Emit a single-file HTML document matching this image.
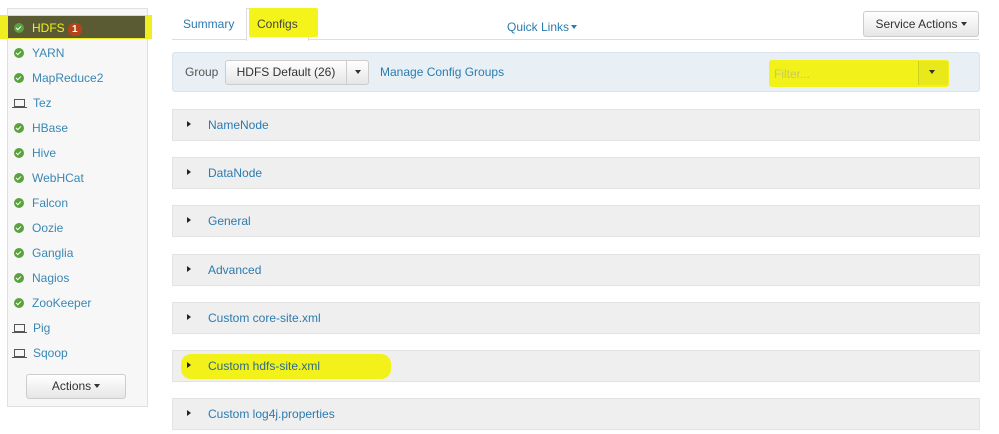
<!DOCTYPE html><html><head><style>
body{margin:0;width:999px;height:434px;background:#fff;font-family:"Liberation Sans",sans-serif;font-size:12px;position:relative;overflow:hidden}
.a{position:absolute}
.lk{color:#2a7bb0}
.side{left:7px;top:8px;width:139px;height:397px;background:#f7f7f7;border:1px solid #e0e0e0}
.it{left:14px;height:25px;line-height:25px;color:#3a87b5;font-size:12px}
.ck{display:inline-block;width:10px;height:10px;border-radius:50%;background:#5aa23c;margin-right:8px;vertical-align:-1px;position:relative}
.ck:after{content:"";position:absolute;left:3px;top:2px;width:2px;height:4px;border:solid #fff;border-width:0 1.5px 1.5px 0;transform:rotate(45deg)}
.lp{display:inline-block;width:9px;height:6px;border:1px solid #555;margin-right:8px;position:relative;vertical-align:0}
.lp:after{content:"";position:absolute;left:-3px;top:7px;width:15px;height:1px;background:#555}
.btn{background:linear-gradient(#fff,#e6e6e6);border:1px solid #ccc;border-radius:3px;color:#333;text-align:center}
.sec{left:172px;width:806px;height:30px;background:#efefef;border:1px solid #e3e3e3;line-height:30px}
.sec .t{position:absolute;left:14px;top:11px;width:0;height:0;border-left:4px solid #222;border-top:3.5px solid transparent;border-bottom:3.5px solid transparent}
.sec span{position:absolute;left:35px;color:#2a7bb0}
.car{display:inline-block;border-top:4px solid #333;border-left:3.5px solid transparent;border-right:3.5px solid transparent;vertical-align:2px;margin-left:3px}
</style></head><body>
<div class="a side"></div>
<div class="a" style="left:0;top:15px;width:152px;height:24px;background:#eeee22"></div>
<div class="a" style="left:8px;top:16px;width:137px;height:22px;background:#5b5b33"></div>
<div class="a it" style="top:16px;color:#f0f020"><span class="ck"></span>HDFS <span style="display:inline-block;background:#b5431a;color:#fff;border-radius:6px;font-size:10px;font-weight:bold;padding:0 4px;line-height:13px">1</span></div>
<div class="a it" style="top:41px"><span class="ck"></span>YARN</div>
<div class="a it" style="top:66px"><span class="ck"></span>MapReduce2</div>
<div class="a it" style="top:91px"><span class="lp"></span>Tez</div>
<div class="a it" style="top:116px"><span class="ck"></span>HBase</div>
<div class="a it" style="top:141px"><span class="ck"></span>Hive</div>
<div class="a it" style="top:166px"><span class="ck"></span>WebHCat</div>
<div class="a it" style="top:191px"><span class="ck"></span>Falcon</div>
<div class="a it" style="top:216px"><span class="ck"></span>Oozie</div>
<div class="a it" style="top:241px"><span class="ck"></span>Ganglia</div>
<div class="a it" style="top:266px"><span class="ck"></span>Nagios</div>
<div class="a it" style="top:291px"><span class="ck"></span>ZooKeeper</div>
<div class="a it" style="top:316px"><span class="lp"></span>Pig</div>
<div class="a it" style="top:341px"><span class="lp"></span>Sqoop</div>
<div class="a btn" style="left:26px;top:374px;width:98px;height:23px;line-height:23px">Actions<span class="car"></span></div>

<div class="a" style="left:172px;top:39px;width:807px;height:1px;background:#ddd"></div>
<div class="a lk" style="left:183px;top:17px">Summary</div>
<div class="a" style="left:246px;top:8px;width:61px;height:32px;background:#fff;border:1px solid #ddd;border-bottom:none"></div>
<div class="a" style="left:249px;top:8px;width:69px;height:29px;background:#f4f41a;border-radius:2px"></div>
<div class="a" style="left:257px;top:17px;color:#444">Configs</div>
<div class="a lk" style="left:507px;top:20px">Quick Links<span class="car" style="border-top-color:#2a7bb0;margin-left:2px"></span></div>
<div class="a btn" style="left:863px;top:11px;width:114px;height:24px;line-height:24px">Service Actions<span class="car"></span></div>

<div class="a" style="left:172px;top:52px;width:806px;height:38px;background:#e9f0f5;border:1px solid #dbe4ea;border-radius:3px"></div>
<div class="a" style="left:185px;top:65px;color:#555">Group</div>
<div class="a btn" style="left:225px;top:60px;width:120px;height:23px;line-height:23px;border-radius:3px 0 0 3px">HDFS Default (26)</div>
<div class="a btn" style="left:346px;top:60px;width:21px;height:23px;line-height:23px;border-radius:0 3px 3px 0"><span class="car" style="margin:0"></span></div>
<div class="a lk" style="left:380px;top:65px">Manage Config Groups</div>
<div class="a" style="left:769px;top:60px;width:180px;height:27px;background:#f2f21a;border-radius:3px"></div>
<div class="a" style="left:774px;top:67px;color:#c8c860">Filter...</div>
<div class="a" style="left:918px;top:61px;width:29px;height:24px;background:#e8e81a;border-left:1px solid #d0d020"></div>
<div class="a" style="left:929px;top:70px;width:0;height:0;border-top:4px solid #333;border-left:3.5px solid transparent;border-right:3.5px solid transparent"></div>

<div class="a sec" style="top:109px"><i class="t"></i><span>NameNode</span></div>
<div class="a sec" style="top:157px"><i class="t"></i><span>DataNode</span></div>
<div class="a sec" style="top:205px"><i class="t"></i><span>General</span></div>
<div class="a sec" style="top:254px"><i class="t"></i><span>Advanced</span></div>
<div class="a sec" style="top:302px"><i class="t"></i><span>Custom core-site.xml</span></div>
<div class="a sec" style="top:350px"><div class="a" style="left:8px;top:3px;width:210px;height:25px;background:#f2f21a;border-radius:10px"></div><i class="t"></i><span style="color:#2a6a8a">Custom hdfs-site.xml</span></div>
<div class="a sec" style="top:398px"><i class="t"></i><span>Custom log4j.properties</span></div>
</body></html>
